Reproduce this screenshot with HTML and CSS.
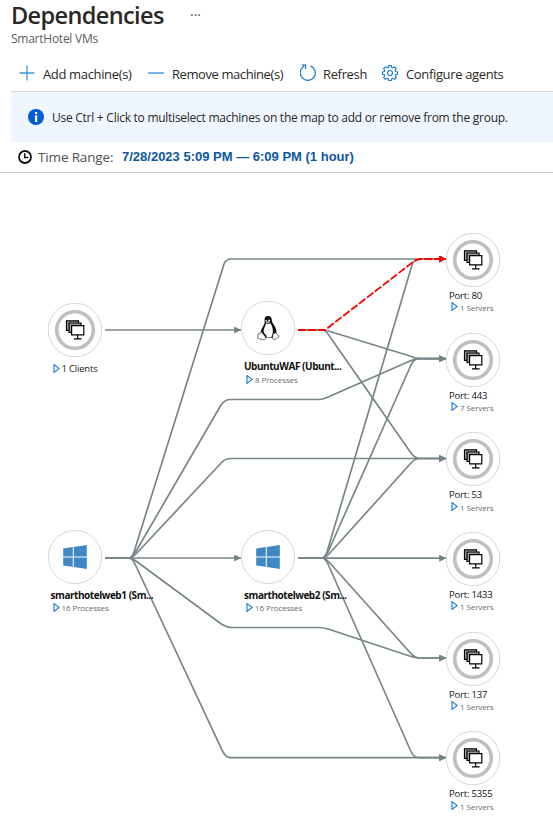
FILE: index.html
```html
<!DOCTYPE html>
<html lang="en">
<head>
<meta charset="utf-8">
<title>Dependencies</title>
<link rel="stylesheet" href="styles.css">
</head>
<body>
<svg class="defs" width="0" height="0">
  <defs>
    <symbol id="group" viewBox="0 0 54 54">
      <circle cx="27" cy="27" r="26.8" fill="#fff" stroke="#d6d6d6" stroke-width="1"/>
      <circle cx="27" cy="27" r="18.3" fill="#fff" stroke="#bfbfbf" stroke-width="3.6"/>
      <g fill="#fff" stroke="#000" stroke-width="1.2">
        <path fill="#aaa" d="M18.5 17.8h12v9.5h-12z"/>
        <path fill="#999" d="M21 20h12v9.5H21z"/>
        <path d="M23.6 22.6h12.2v9.3H23.6z"/>
        <path d="M29.7 32v3.7M26 35.8h7.6"/>
      </g>
    </symbol>
    <symbol id="windows" viewBox="0 0 54 54">
      <circle cx="27" cy="27" r="26.6" fill="#fff" stroke="#d6d6d6"/>
      <path fill="#3f88c5" d="M15.2 18.5l9.600-1.400v9.300h-9.600zM25.800 17l13-1.900v11.300h-13zM15.200 27.600h9.600v9.200l-9.600-1.400zM25.800 27.600h13v11.300l-13-1.900z"/>
    </symbol>
    <symbol id="linux" viewBox="0 0 54 54">
      <circle cx="27" cy="27" r="26.6" fill="#fff" stroke="#d6d6d6"/>
      <path fill="#111" d="M27 15c-2.700 0-3.600 2-3.400 4.200.2 3-.2 4-1.700 6.200-1.500 2.300-2.400 5-2.300 7.300l2.500 4.300h10l3.400-5c.2-3-1.200-5.800-2.700-8.200-1.700-2.500-1.900-3.300-2-5.200-.1-2.300-1.400-3.600-3.800-3.600z"/>
      <path fill="#fff" d="M25.200 22.300c-.7 2.500-2.600 5.200-2.600 8.200 0 1.200 1.400 2.400 2.700 4 .6.900.4 1.500-.2 2h5.200l1.500-4.500c.6-3.600-.9-7.400-2.300-9.700-1.500 1-3 1.100-4.300 0z"/>
      <path fill="#fff" d="M24.500 19h1.300v1.500h-1.300zM27.300 18.800h1.700v1.700h-1.700z"/>
      <path fill="#bbb" d="M24.500 21.200l2-1 2.800 1-2.600 1.400z"/>
      <path fill="#fff" stroke="#333" stroke-width=".7" d="M20.500 31l-1.500 1.500-2.200.7.200 2.100-.6 1.800c1.500 1.200 4.300.8 6.300 1.700 1.600.1 2.400-1.200 1.800-2.700zM32 32.500l-.4 5c.7 1.600 2.500 1.200 3.600.1l3-2-2.300-2.600-1.100-1.400c-1 .8-1.900 1.300-2.800.9z"/>
    </symbol>
    <symbol id="expand" viewBox="0 0 7 9">
      <path d="M1 .6v7.800l5.200-3.900z" fill="none" stroke="#1479cf" stroke-width="1.100"/>
    </symbol>
  </defs>
</svg>

<header class="head">
  <h1 class="title">Dependencies</h1>
  <span class="more">···</span>
</header>
<div class="subtitle">SmartHotel VMs</div>

<nav class="toolbar">
  <button class="cmd add"><svg width="16" height="16" viewBox="0 0 16 16"><path d="M8 .5v15M.5 8h15" fill="none" stroke="#3e96dc" stroke-width="1.300"/></svg><span>Add machine(s)</span></button>
  <button class="cmd remove"><svg width="16" height="16" viewBox="0 0 16 16"><path d="M0 8h16" stroke="#3e96dc" stroke-width="1.400"/></svg><span>Remove machine(s)</span></button>
  <button class="cmd refresh"><svg width="16" height="17" viewBox="0 0 16 17"><path d="M10.500 1.800A7.500 7.500 0 1 1 4 2.300M1.800 1h3.700v3.800" fill="none" stroke="#1479cf" stroke-width="1.250"/></svg><span>Refresh</span></button>
  <button class="cmd configure"><svg width="16" height="16" viewBox="0 0 16 16" fill="none" stroke="#1479cf" stroke-width="1.100"><path d="M6.700.6h2.600l.5 2 1 .4 1.800-1.100 1.700 1.700-1.100 1.800.5 1.100 1.800.4v2.400l-1.800.5-.5 1.100 1.100 1.700-1.700 1.800-1.800-1.100-1 .4-.5 1.800H6.700l-.5-1.800-1.100-.4-1.700 1.100-1.800-1.800 1.100-1.700-.4-1.100-1.700-.5V6.900l1.700-.4.4-1.100-1.100-1.800 1.800-1.700L5.100 3l1.100-.4z"/><circle cx="8" cy="8" r="2.500"/></svg><span>Configure agents</span></button>
</nav>

<div class="banner">
  <svg width="16" height="16" viewBox="0 0 16 16"><circle cx="8" cy="8" r="8" fill="#015cda"/><path fill="#fff" d="M7 6.300h2.200V13H7zM7 3h2.200v2.100H7z"/></svg>
  <span>Use Ctrl + Click to multiselect machines on the map to add or remove from the group.</span>
</div>

<div class="range">
  <svg width="14" height="14" viewBox="0 0 14 14" fill="none" stroke="#111"><circle cx="7" cy="7" r="6" stroke-width="1.800"/><path d="M6.700 3.200v4.300h3.600" stroke-width="1.500"/></svg>
  <span class="range-label">Time Range:</span>
  <a class="range-value">7/28/2023 5:09 PM — 6:09 PM (1 hour)</a>
</div>

<main class="map">
  <svg class="edges" width="553" height="659" viewBox="0 173 553 659">
    <defs>
      <marker id="arrow" markerUnits="userSpaceOnUse" markerWidth="8" markerHeight="7" refX="6.800" refY="3.500" orient="auto"><path d="M0 0L7 3.500 0 7z" fill="#738184"/></marker>
      <marker id="arrow-red" markerUnits="userSpaceOnUse" markerWidth="8" markerHeight="7" refX="6.800" refY="3.500" orient="auto"><path d="M0 0L7 3.500 0 7z" fill="#f00"/></marker>
    </defs>
    <g class="edge">
      <path d="M105 330H241"/>
      <path d="M105 558H129Q132 558 134 552L224 264Q226 259 231 259H446"/>
      <path d="M105 558H129Q132 558 135 553L221 405Q225 399.500 230 399.500H318Q323 399.500 327 397.500L410 361Q415 358.700 420 358.700H446"/>
      <path d="M105 558H128Q132 558 136 554L222 462Q226 458.500 231 458.500H446"/>
      <path d="M105 558H241"/>
      <path d="M105 558H128Q132 558 136 561L222 624.500Q227 627.500 232 627.500H318Q323 627.500 328 629L408 655.500Q415 658 420 658H446"/>
      <path d="M105 558H129Q132 558 135 564L223 752Q226 757.700 231 757.700H446"/>
      <path d="M298 330H322Q325 330 330 331.500L410 356Q416 358.700 421 358.700H446"/>
      <path d="M298 330H322Q325 330 328 334L411 453Q415 458.500 420 458.500H446"/>
      <path d="M298 558H322Q325 558 327 552L412 265Q414 259 419 259H446"/>
      <path d="M298 558H322Q325 558 328 552L411 365Q414 358.700 419 358.700H446"/>
      <path d="M298 558H322Q325 558 329 554L411 463Q415 458.500 420 458.500H446"/>
      <path d="M298 558.200H446"/>
      <path d="M298 558H322Q325 558 329 562L410 652.500Q415 658 420 658H446"/>
      <path d="M298 558H322Q325 558 328 564L411 751.500Q414 757.700 419 757.700H446"/>
    </g>
    <path class="edge-failed" d="M298 330H325L413 262Q417 259 421 259H446"/>
  </svg>

  <section class="node clients"><svg class="disc"><use href="#group"/></svg><div class="count dark"><svg><use href="#expand"/></svg><span>1 Clients</span></div></section>
  <section class="node machine ubuntu"><svg class="disc"><use href="#linux"/></svg><div class="name">UbuntuWAF (Ubunt...</div><div class="count"><svg><use href="#expand"/></svg><span>8 Processes</span></div></section>
  <section class="node machine web1"><svg class="disc"><use href="#windows"/></svg><div class="name">smarthotelweb1 (Sm...</div><div class="count"><svg><use href="#expand"/></svg><span>16 Processes</span></div></section>
  <section class="node machine web2"><svg class="disc"><use href="#windows"/></svg><div class="name">smarthotelweb2 (Sm...</div><div class="count"><svg><use href="#expand"/></svg><span>16 Processes</span></div></section>

  <section class="node port p80"><svg class="disc"><use href="#group"/></svg><div class="name">Port: 80</div><div class="count"><svg><use href="#expand"/></svg><span>1 Servers</span></div></section>
  <section class="node port p443"><svg class="disc"><use href="#group"/></svg><div class="name">Port: 443</div><div class="count"><svg><use href="#expand"/></svg><span>7 Servers</span></div></section>
  <section class="node port p53"><svg class="disc"><use href="#group"/></svg><div class="name">Port: 53</div><div class="count"><svg><use href="#expand"/></svg><span>1 Servers</span></div></section>
  <section class="node port p1433"><svg class="disc"><use href="#group"/></svg><div class="name">Port: 1433</div><div class="count"><svg><use href="#expand"/></svg><span>1 Servers</span></div></section>
  <section class="node port p137"><svg class="disc"><use href="#group"/></svg><div class="name">Port: 137</div><div class="count"><svg><use href="#expand"/></svg><span>1 Servers</span></div></section>
  <section class="node port p5355"><svg class="disc"><use href="#group"/></svg><div class="name">Port: 5355</div><div class="count"><svg><use href="#expand"/></svg><span>1 Servers</span></div></section>
</main>
</body>
</html>
```
FILE: styles.css
```css
* { box-sizing: border-box; }
body {
  margin: 0;
  width: 553px;
  height: 832px;
  overflow: hidden;
  background: #fff;
  color: #292827;
  font-family: "Open Sans", "Noto Sans", sans-serif;
}
.defs { position: absolute; }
.head { display: flex; height: 30px; padding-left: 11px; }
.title { margin: 0; font-size: 23.5px; font-weight: 600; line-height: 30px; letter-spacing: -0.62px; width: 179px; white-space: nowrap; }
.more { font-size: 14px; line-height: 29px; color: #555; }
.subtitle { height: 18px; padding-left: 11px; font-size: 12px; line-height: 18px; letter-spacing: -0.25px; color: #605e5c; }
.toolbar { display: flex; height: 44px; margin-left: 11px; padding: 8px 0 0 8px; border-bottom: 1px solid #d0d2d5; }
.cmd {
  display: flex;
  align-items: center;
  height: 35px;
  padding: 0;
  border: 0;
  background: none;
  color: inherit;
  font: 13px/20px "Open Sans", sans-serif;
  letter-spacing: -0.35px;
  white-space: nowrap;
}
.cmd svg { margin-top: -2px; flex: none; }
.cmd span { margin-left: 8px; }
.add { width: 129px; }
.remove { width: 152px; }
.remove span { letter-spacing: -0.42px; }
.refresh { width: 82px; }
.refresh span { margin-left: 7px; }
.banner {
  display: flex;
  align-items: center;
  height: 50px;
  margin-left: 11px;
  padding-left: 17px;
  gap: 8px;
  background: #eff6ff;
  font-size: 12px;
  letter-spacing: -0.26px;
  white-space: nowrap;
}
.banner span { padding-top: 1px; }
.range { display: flex; align-items: center; height: 31px; padding-left: 18px; border-bottom: 1px solid #c4c8ce; white-space: nowrap; }
.range-label { width: 84px; margin-left: 6px; font-size: 13.5px; letter-spacing: -0.15px; color: #505050; }
.range-value { font: bold 13px/16px "Liberation Sans", sans-serif; color: #0b57a4; }
.map { position: relative; width: 553px; height: 659px; }
.edges { display: block; }
.edge { fill: none; stroke: #788689; stroke-width: 1.7; }
.edge path { marker-end: url(#arrow); }
.edge-failed { fill: none; stroke: #f00; stroke-width: 1.8; stroke-dasharray: 8 2; marker-end: url(#arrow-red); }
.node { position: absolute; width: 54px; }
.disc { display: block; width: 54px; height: 54px; overflow: visible; }
.name { margin-left: 3px; font-size: 10px; line-height: 13px; color: #111; white-space: nowrap; }
.machine .name { font-weight: 700; letter-spacing: -0.45px; margin-top: 5px; }
.port .name { margin-top: 2px; font-size: 9.5px; letter-spacing: -0.2px; }
.count { display: flex; align-items: center; margin-left: 5px; height: 12px; font-size: 8px; letter-spacing: -0.1px; color: #6b6b6b; white-space: nowrap; }
.count svg { flex: none; width: 7px; height: 9px; margin-right: 2px; }
.port .count svg { margin-top: -2px; }
.dark { margin-top: 5px; color: #222; font-size: 9.5px; letter-spacing: -0.2px; }
.clients { left: 47.5px; top: 130px; }
.ubuntu { left: 241px; top: 128px; }
.web1 { left: 47.5px; top: 356.5px; }
.web2 { left: 241px; top: 356.5px; }
.port { left: 446px; }
.p80 { top: 59.5px; }
.p443 { top: 159.5px; }
.p53 { top: 259px; }
.p1433 { top: 358.5px; }
.p137 { top: 458.5px; }
.p5355 { top: 558px; }
```
